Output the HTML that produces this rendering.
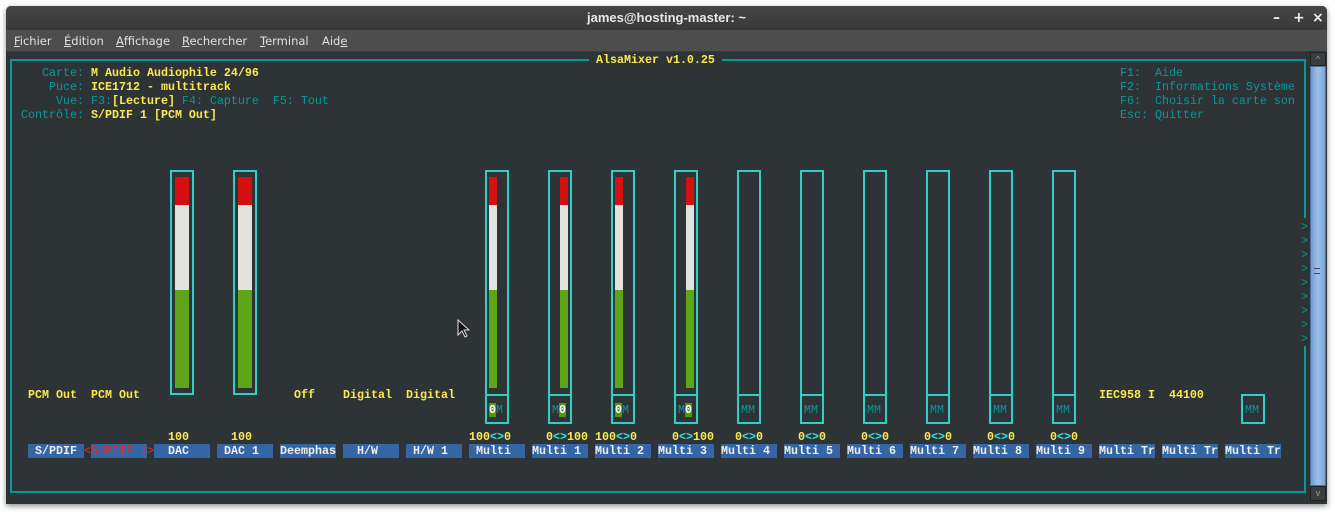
<!DOCTYPE html>
<html><head><meta charset="utf-8"><style>
*{margin:0;padding:0;box-sizing:border-box}
body{width:1335px;height:514px;background:#fff;position:relative;overflow:hidden;font-family:"Liberation Mono",monospace}
.win{position:absolute;left:6px;top:6px;width:1321px;height:498px;background:#2e3436;border-radius:5px 5px 0 0;box-shadow:0 2px 6px rgba(0,0,0,.45);overflow:hidden}
.tb{position:absolute;left:0;top:0;width:100%;height:24px;background:linear-gradient(#454545,#393939);color:#e8e8e8;font:bold 13px "Liberation Sans","DejaVu Sans",sans-serif;text-align:center;line-height:24px}
.mb{position:absolute;left:0;top:24px;width:100%;height:22px;background:#4d4d4d;border-bottom:1px solid #3a3a3a;color:#e0e0e0;font:11.5px "DejaVu Sans","Liberation Sans",sans-serif;line-height:22px}
.mb span{position:absolute;top:0}
.ctl{position:absolute;top:0;color:#eee;font:bold 14px "DejaVu Sans",sans-serif;line-height:24px}
.t{position:absolute;font-size:11.67px;line-height:14px;white-space:pre;height:14px;margin-top:1px}
.y{color:#fce94f;font-weight:bold}
.c{color:#06989a}
.cb{color:#34e2e2}
.lab{background:#3465a4;color:#eeeeec;font-weight:bold;width:56px;margin-top:0}
.box{position:absolute;border:2px solid #30cfc4}
.bar{position:absolute;width:8px}
</style></head><body>
<div class="win">
<div class="tb">james@hosting-master: ~</div>
<span class="ctl" style="left:1267px">–</span><span class="ctl" style="left:1287px">+</span><span class="ctl" style="left:1306px">×</span>
<div class="mb">
<span style="left:8px"><u>F</u>ichier</span><span style="left:58px"><u>É</u>dition</span><span style="left:110px"><u>A</u>ffichage</span><span style="left:176px"><u>R</u>echercher</span><span style="left:254px"><u>T</u>erminal</span><span style="left:316px">Aid<u>e</u></span>
</div>
</div>
<!-- scrollbar -->
<div style="position:absolute;left:1310px;top:52px;width:16px;height:14px;background:#3a3d3f;border:1px solid #222;color:#999;font:9px sans-serif;text-align:center;line-height:12px">^</div>
<div style="position:absolute;left:1310px;top:66px;width:16px;height:420px;background:linear-gradient(90deg,#6f9bd0,#9dc0ea,#7aa5d8);border:1px solid #4d6f9a"></div>
<div style="position:absolute;left:1310px;top:486px;width:16px;height:15px;background:#3a3d3f;border:1px solid #222;color:#999;font:9px sans-serif;text-align:center;line-height:12px">v</div>
<div style="position:absolute;left:1314px;top:268px;width:6px;height:6px;border-top:1px solid #446;border-bottom:1px solid #446"></div>
<!-- frame -->
<div style="position:absolute;left:10px;top:59px;width:1296px;height:434px;border:2px solid #06989a"></div>
<div style="position:absolute;left:1300px;top:218px;width:8px;height:128px;background:#2e3436"></div>
<div class="t y" style="left:589px;top:53px;background:#2e3436;padding:0 7px;margin-top:0">AlsaMixer v1.0.25</div>
<div class="t c" style="left:42px;top:65px">Carte:</div><div class="t y" style="left:91px;top:65px">M Audio Audiophile 24/96</div>
<div class="t c" style="left:49px;top:79px">Puce:</div><div class="t y" style="left:91px;top:79px">ICE1712 - multitrack</div>
<div class="t c" style="left:56px;top:93px">Vue:</div><div class="t" style="left:91px;top:93px"><span class="c">F3:</span><span class="y">[Lecture]</span><span class="c"> F4: Capture  F5: Tout</span></div>
<div class="t c" style="left:21px;top:107px">Contrôle:</div><div class="t y" style="left:91px;top:107px">S/PDIF 1 [PCM Out]</div>
<div class="t c" style="left:1120px;top:65px">F1:  Aide</div>
<div class="t c" style="left:1120px;top:79px">F2:  Informations Système</div>
<div class="t c" style="left:1120px;top:93px">F6:  Choisir la carte son</div>
<div class="t c" style="left:1120px;top:107px">Esc: Quitter</div>
<div class="t c" style="left:1301px;top:219px;line-height:14px;height:auto">&gt;<br>&gt;<br>&gt;<br>&gt;<br>&gt;<br>&gt;<br>&gt;<br>&gt;<br>&gt;</div>

<!-- DAC sliders -->
<div class="box" style="left:170px;top:170px;width:24px;height:225px"></div>
<div class="bar" style="left:175px;top:177px;width:14px;height:28px;background:#d41010"></div>
<div class="bar" style="left:175px;top:205px;width:14px;height:85px;background:#e2e2df"></div>
<div class="bar" style="left:175px;top:290px;width:14px;height:98px;background:#5ea51a"></div>
<div class="box" style="left:233px;top:170px;width:24px;height:225px"></div>
<div class="bar" style="left:238px;top:177px;width:14px;height:28px;background:#d41010"></div>
<div class="bar" style="left:238px;top:205px;width:14px;height:85px;background:#e2e2df"></div>
<div class="bar" style="left:238px;top:290px;width:14px;height:98px;background:#5ea51a"></div>

<!-- Multi sliders -->
<div class="box" style="left:485px;top:170px;width:24px;height:254px;"></div><div class="box" style="left:485px;top:394px;width:24px;height:2px;border-width:1px"></div>
<div class="box" style="left:548px;top:170px;width:24px;height:254px"></div><div class="box" style="left:548px;top:394px;width:24px;height:2px;border-width:1px"></div>
<div class="box" style="left:611px;top:170px;width:24px;height:254px"></div><div class="box" style="left:611px;top:394px;width:24px;height:2px;border-width:1px"></div>
<div class="box" style="left:674px;top:170px;width:24px;height:254px"></div><div class="box" style="left:674px;top:394px;width:24px;height:2px;border-width:1px"></div>
<div class="box" style="left:737px;top:170px;width:24px;height:254px"></div><div class="box" style="left:737px;top:394px;width:24px;height:2px;border-width:1px"></div>
<div class="box" style="left:800px;top:170px;width:24px;height:254px"></div><div class="box" style="left:800px;top:394px;width:24px;height:2px;border-width:1px"></div>
<div class="box" style="left:863px;top:170px;width:24px;height:254px"></div><div class="box" style="left:863px;top:394px;width:24px;height:2px;border-width:1px"></div>
<div class="box" style="left:926px;top:170px;width:24px;height:254px"></div><div class="box" style="left:926px;top:394px;width:24px;height:2px;border-width:1px"></div>
<div class="box" style="left:989px;top:170px;width:24px;height:254px"></div><div class="box" style="left:989px;top:394px;width:24px;height:2px;border-width:1px"></div>
<div class="box" style="left:1052px;top:170px;width:24px;height:254px"></div><div class="box" style="left:1052px;top:394px;width:24px;height:2px;border-width:1px"></div>
<div class="box" style="left:1241px;top:394px;width:24px;height:30px"></div>

<div class="bar" style="left:489px;top:177px;height:28px;background:#d41010"></div><div class="bar" style="left:489px;top:205px;height:85px;background:#e2e2df"></div><div class="bar" style="left:489px;top:290px;height:98px;background:#5ea51a"></div>
<div class="bar" style="left:560px;top:177px;height:28px;background:#d41010"></div><div class="bar" style="left:560px;top:205px;height:85px;background:#e2e2df"></div><div class="bar" style="left:560px;top:290px;height:98px;background:#5ea51a"></div>
<div class="bar" style="left:615px;top:177px;height:28px;background:#d41010"></div><div class="bar" style="left:615px;top:205px;height:85px;background:#e2e2df"></div><div class="bar" style="left:615px;top:290px;height:98px;background:#5ea51a"></div>
<div class="bar" style="left:686px;top:177px;height:28px;background:#d41010"></div><div class="bar" style="left:686px;top:205px;height:85px;background:#e2e2df"></div><div class="bar" style="left:686px;top:290px;height:98px;background:#5ea51a"></div>

<!-- switches -->
<div class="t" style="left:489px;top:402px"><span style="background:#4e9a06;color:#fff;font-weight:bold">0</span><span class="c">M</span></div>
<div class="t" style="left:552px;top:402px"><span class="c">M</span><span style="background:#4e9a06;color:#fff;font-weight:bold">0</span></div>
<div class="t" style="left:615px;top:402px"><span style="background:#4e9a06;color:#fff;font-weight:bold">0</span><span class="c">M</span></div>
<div class="t" style="left:678px;top:402px"><span class="c">M</span><span style="background:#4e9a06;color:#fff;font-weight:bold">0</span></div>
<div class="t c" style="left:741px;top:402px">MM</div><div class="t c" style="left:804px;top:402px">MM</div><div class="t c" style="left:867px;top:402px">MM</div><div class="t c" style="left:930px;top:402px">MM</div><div class="t c" style="left:993px;top:402px">MM</div><div class="t c" style="left:1056px;top:402px">MM</div><div class="t c" style="left:1245px;top:402px">MM</div>

<!-- labels row -->
<div class="t y" style="left:28px;top:387px">PCM Out</div>
<div class="t y" style="left:91px;top:387px">PCM Out</div>
<div class="t y" style="left:294px;top:387px">Off</div>
<div class="t y" style="left:343px;top:387px">Digital</div>
<div class="t y" style="left:406px;top:387px">Digital</div>
<div class="t y" style="left:1099px;top:387px">IEC958 I  44100</div>

<!-- values -->
<div class="t y" style="left:168px;top:429px">100</div>
<div class="t y" style="left:231px;top:429px">100</div>
<div class="t y" style="left:469px;top:429px">100<span class="cb">&lt;&gt;</span>0</div>
<div class="t y" style="left:546px;top:429px">0<span class="cb">&lt;&gt;</span>100</div>
<div class="t y" style="left:595px;top:429px">100<span class="cb">&lt;&gt;</span>0</div>
<div class="t y" style="left:672px;top:429px">0<span class="cb">&lt;&gt;</span>100</div>
<div class="t y" style="left:735px;top:429px">0<span class="cb">&lt;&gt;</span>0</div>
<div class="t y" style="left:798px;top:429px">0<span class="cb">&lt;&gt;</span>0</div>
<div class="t y" style="left:861px;top:429px">0<span class="cb">&lt;&gt;</span>0</div>
<div class="t y" style="left:924px;top:429px">0<span class="cb">&lt;&gt;</span>0</div>
<div class="t y" style="left:987px;top:429px">0<span class="cb">&lt;&gt;</span>0</div>
<div class="t y" style="left:1050px;top:429px">0<span class="cb">&lt;&gt;</span>0</div>

<!-- names -->
<div class="t lab" style="left:28px;top:444px"> S/PDIF </div>
<div class="t" style="left:84px;top:443px;color:#ef2929">&lt;</div>
<div class="t lab" style="left:91px;top:444px;color:#ef2929;font-weight:normal">S/PDIF 1</div>
<div class="t" style="left:147px;top:443px;color:#ef2929">&gt;</div>
<div class="t lab" style="left:154px;top:444px">  DAC   </div>
<div class="t lab" style="left:217px;top:444px"> DAC 1  </div>
<div class="t lab" style="left:280px;top:444px">Deemphas</div>
<div class="t lab" style="left:343px;top:444px">  H/W   </div>
<div class="t lab" style="left:406px;top:444px"> H/W 1  </div>
<div class="t lab" style="left:469px;top:444px"> Multi  </div>
<div class="t lab" style="left:532px;top:444px">Multi 1 </div>
<div class="t lab" style="left:595px;top:444px">Multi 2 </div>
<div class="t lab" style="left:658px;top:444px">Multi 3 </div>
<div class="t lab" style="left:721px;top:444px">Multi 4 </div>
<div class="t lab" style="left:784px;top:444px">Multi 5 </div>
<div class="t lab" style="left:847px;top:444px">Multi 6 </div>
<div class="t lab" style="left:910px;top:444px">Multi 7 </div>
<div class="t lab" style="left:973px;top:444px">Multi 8 </div>
<div class="t lab" style="left:1036px;top:444px">Multi 9 </div>
<div class="t lab" style="left:1099px;top:444px">Multi Tr</div>
<div class="t lab" style="left:1162px;top:444px">Multi Tr</div>
<div class="t lab" style="left:1225px;top:444px">Multi Tr</div>

<!-- cursor -->
<svg style="position:absolute;left:457px;top:319px" width="14" height="20" viewBox="0 0 14 20"><path d="M1 1 L1 16 L5 12 L8 18 L10 17 L7 11 L12 11 Z" fill="#111" stroke="#ddd" stroke-width="1"/></svg>
</body></html>
